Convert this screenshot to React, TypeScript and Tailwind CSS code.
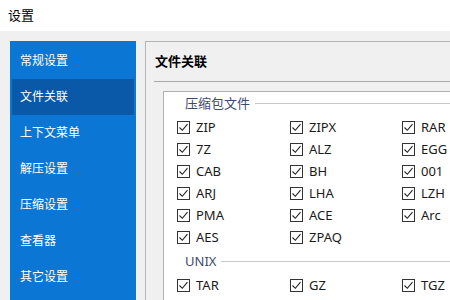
import React from "react";

const font = { fontFamily: '"Noto Sans", "Noto Sans CJK SC", sans-serif' };

const navItems = ["常规设置", "文件关联", "上下文菜单", "解压设置", "压缩设置", "查看器", "其它设置"];

function Check({ label }: { label: string }) {
  return (
    <div className="flex items-center h-[22px]">
      <div className="w-[13px] h-[13px] border border-[#333333] bg-white flex items-center justify-center shrink-0">
        <svg width="11" height="11" viewBox="0 0 11 11">
          <polyline points="1.5,5.5 4.3,8.3 9.5,2.2" fill="none" stroke="#222" strokeWidth="1.1" />
        </svg>
      </div>
      <span className="ml-[6px] text-[13px] leading-none text-[#1a1a1a]">{label}</span>
    </div>
  );
}

function Group({ title, items }: { title: string; items: string[] }) {
  return (
    <div>
      <div className="flex items-center h-[18px] pl-[21px]">
        <span className="text-[13px] leading-none text-[#3d4a70]">{title}</span>
        <div className="flex-1 h-px bg-[#c8c8c8] ml-[5px]" />
      </div>
      <div className="grid grid-cols-[113px_112px_1fr] pl-[13px] mt-[4px]">
        {items.map((it) => (
          <Check key={it} label={it} />
        ))}
      </div>
    </div>
  );
}

export default function App() {
  return (
    <div className="w-[450px] h-[300px] overflow-hidden bg-[#f0f0f0] flex flex-col" style={font}>
      <div className="h-[31px] bg-white flex items-center pl-[8px] shrink-0">
        <span className="text-[13px] text-black">设置</span>
      </div>
      <div className="flex pt-[10px] pl-[10px] flex-1 min-h-0">
        <div className="w-[126px] bg-[#0c76d4] px-[2px] pt-[2px] shrink-0">
          {navItems.map((n) => (
            <div
              key={n}
              className={
                "h-[36px] flex items-center pl-[8px] text-[12px] text-white " +
                (n === "文件关联" ? "bg-[#0a58a8]" : "")
              }
            >
              {n}
            </div>
          ))}
        </div>
        <div className="ml-[9px] flex-1 border-l border-t border-[#b4b4b4] bg-[#f0f0f0] flex flex-col min-w-0">
          <div className="h-[39px] flex items-center pl-[9px] shrink-0">
            <span className="text-[13px] font-bold text-black">文件关联</span>
          </div>
          <div className="ml-[8px] h-px bg-[#a8a8a8] shrink-0" />
          <div className="ml-[17px] mt-[9px] flex-1 bg-white border-l border-t border-[#b0b0b0] pt-[2px]">
            <Group title="压缩包文件" items={["ZIP", "ZIPX", "RAR", "7Z", "ALZ", "EGG", "CAB", "BH", "001", "ARJ", "LHA", "LZH", "PMA", "ACE", "Arc", "AES", "ZPAQ"]} />
            <div className="h-[4px]" />
            <Group title="UNIX" items={["TAR", "GZ", "TGZ"]} />
          </div>
        </div>
      </div>
    </div>
  );
}
